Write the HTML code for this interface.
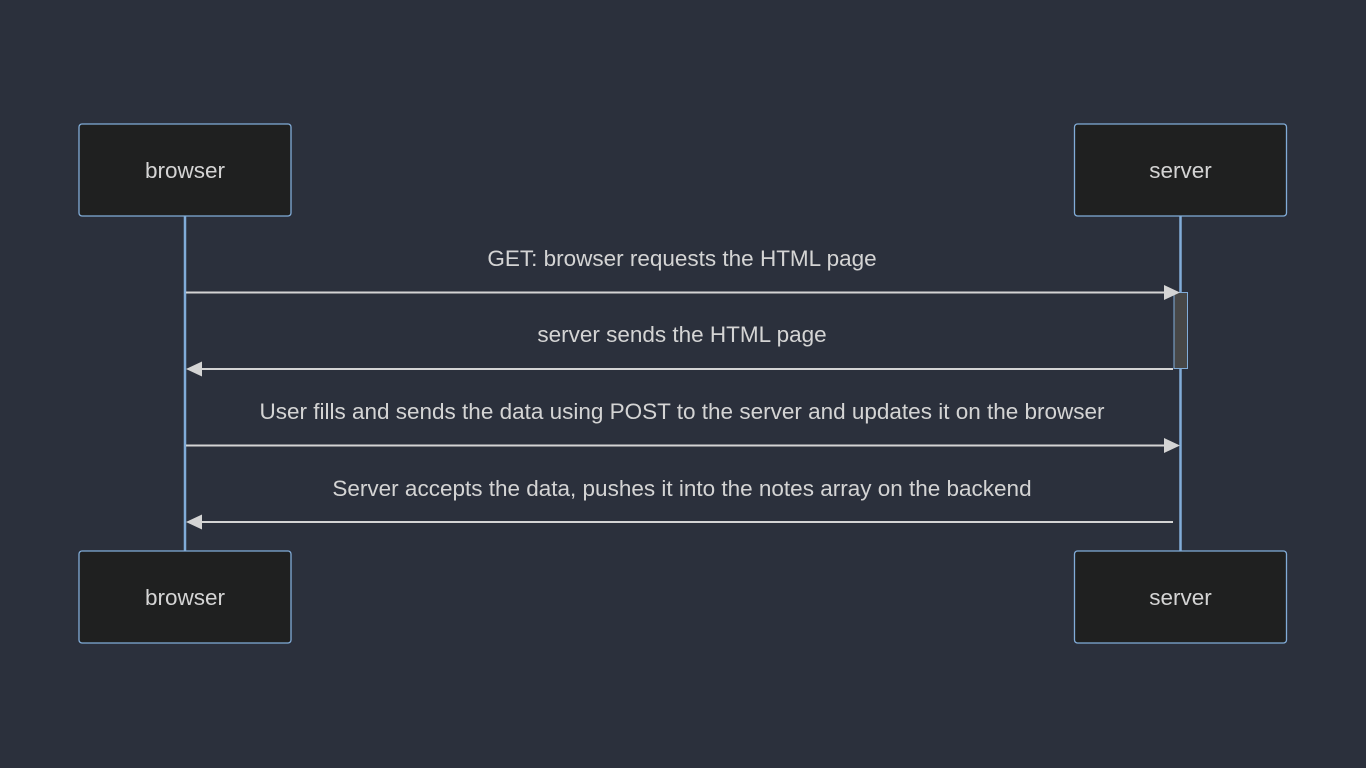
<!DOCTYPE html>
<html><head><meta charset="utf-8"><style>
html,body{margin:0;padding:0;background:#2b303c;width:1366px;height:768px;overflow:hidden}
text{font-family:"Liberation Sans",sans-serif;font-size:22.5px;fill:#d4d4d4}
</style></head><body>
<svg width="1366" height="768" xmlns="http://www.w3.org/2000/svg">
<rect width="1366" height="768" fill="#2b303c"/>
<line x1="185" y1="216" x2="185" y2="551" stroke="#81acd8" stroke-width="2.5"/>
<line x1="1180.5" y1="216" x2="1180.5" y2="551" stroke="#81acd8" stroke-width="2.5"/>
<g fill="#1f2020" stroke="#81acd8" stroke-width="1.3">
<rect x="79" y="124" width="212" height="92" rx="3"/>
<rect x="1074.5" y="124" width="212" height="92" rx="3"/>
<rect x="79" y="551" width="212" height="92" rx="3"/>
<rect x="1074.5" y="551" width="212" height="92" rx="3"/>
</g>
<text x="185" y="178" text-anchor="middle">browser</text>
<text x="1180.5" y="178" text-anchor="middle">server</text>
<text x="185" y="605" text-anchor="middle">browser</text>
<text x="1180.5" y="605" text-anchor="middle">server</text>
<rect x="1174" y="292.5" width="13.5" height="76" fill="#474747" stroke="#81acd8" stroke-width="1"/>
<g stroke="#d4d4d4" stroke-width="2">
<line x1="186" y1="292.5" x2="1166" y2="292.5"/>
<line x1="201" y1="369" x2="1173" y2="369"/>
<line x1="186" y1="445.5" x2="1166" y2="445.5"/>
<line x1="201" y1="522" x2="1173" y2="522"/>
</g>
<g fill="#d4d4d4">
<polygon points="1164,285 1180,292.5 1164,300"/>
<polygon points="202,361.5 186,369 202,376.5"/>
<polygon points="1164,438 1180,445.5 1164,453"/>
<polygon points="202,514.5 186,522 202,529.5"/>
</g>
<text x="682" y="266" text-anchor="middle">GET: browser requests the HTML page</text>
<text x="682" y="342" text-anchor="middle">server sends the HTML page</text>
<text x="682" y="419" text-anchor="middle">User fills and sends the data using POST to the server and updates it on the browser</text>
<text x="682" y="496" text-anchor="middle">Server accepts the data, pushes it into the notes array on the backend</text>
</svg>
</body></html>
